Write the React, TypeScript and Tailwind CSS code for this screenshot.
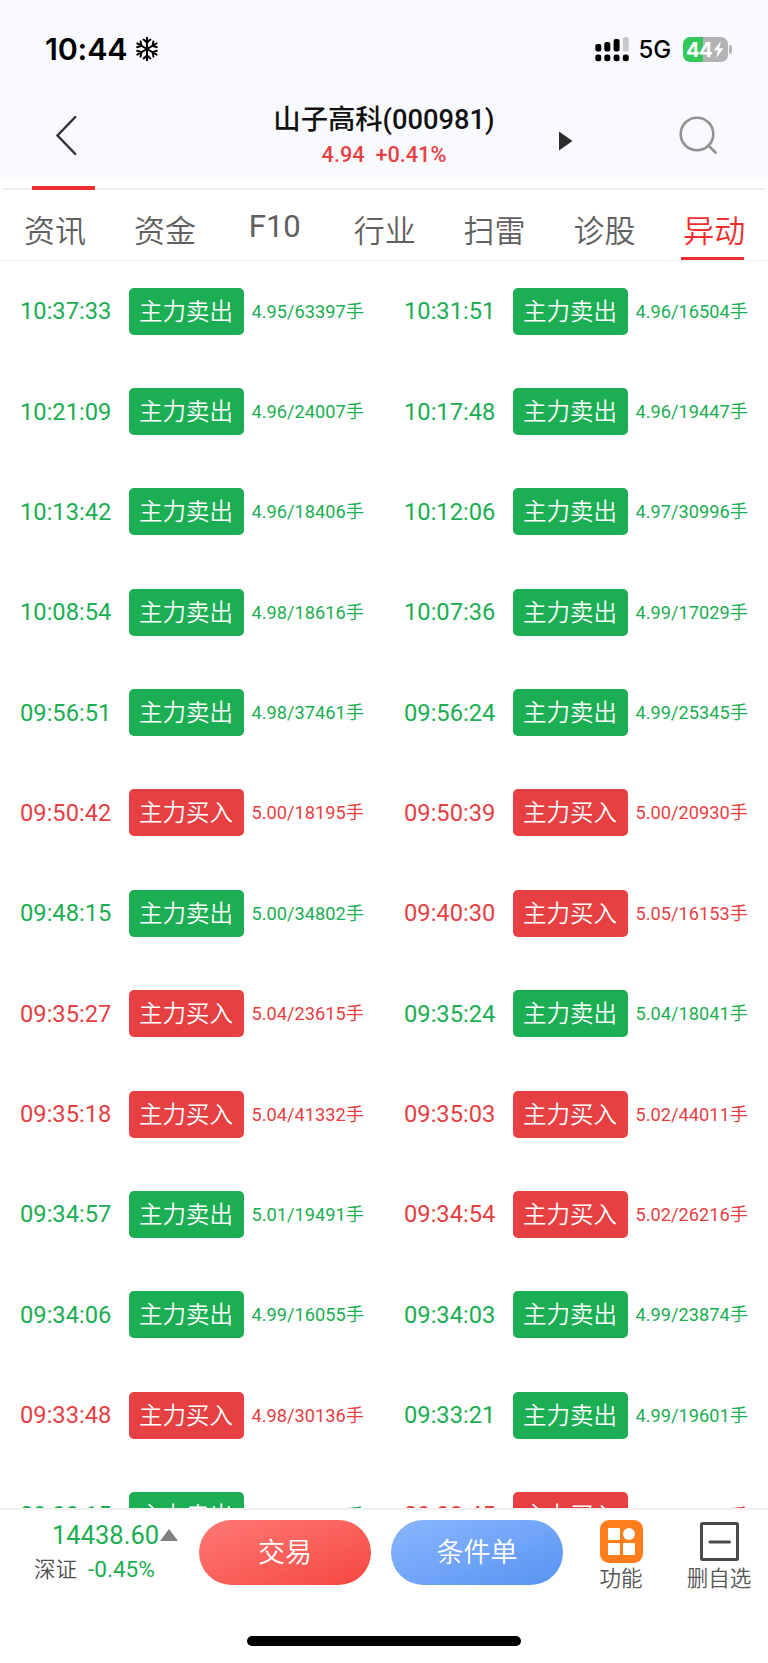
// src/App.tsx
import React from "react";

type Side = "sell" | "buy";
type Trade = [time: string, side: Side, detail: string];

const TABS = ["资讯", "资金", "F10", "行业", "扫雷", "诊股", "异动"];

const TRADES: Trade[] = [
  ["10:37:33", "sell", "4.95/63397"],
  ["10:31:51", "sell", "4.96/16504"],
  ["10:21:09", "sell", "4.96/24007"],
  ["10:17:48", "sell", "4.96/19447"],
  ["10:13:42", "sell", "4.96/18406"],
  ["10:12:06", "sell", "4.97/30996"],
  ["10:08:54", "sell", "4.98/18616"],
  ["10:07:36", "sell", "4.99/17029"],
  ["09:56:51", "sell", "4.98/37461"],
  ["09:56:24", "sell", "4.99/25345"],
  ["09:50:42", "buy", "5.00/18195"],
  ["09:50:39", "buy", "5.00/20930"],
  ["09:48:15", "sell", "5.00/34802"],
  ["09:40:30", "buy", "5.05/16153"],
  ["09:35:27", "buy", "5.04/23615"],
  ["09:35:24", "sell", "5.04/18041"],
  ["09:35:18", "buy", "5.04/41332"],
  ["09:35:03", "buy", "5.02/44011"],
  ["09:34:57", "sell", "5.01/19491"],
  ["09:34:54", "buy", "5.02/26216"],
  ["09:34:06", "sell", "4.99/16055"],
  ["09:34:03", "sell", "4.99/23874"],
  ["09:33:48", "buy", "4.98/30136"],
  ["09:33:21", "sell", "4.99/19601"],
  ["09:33:15", "sell", "4.99/18200"],
  ["09:32:45", "buy", "4.99/17500"],
];

const StatusBar: React.FC = () => (
  <div className="flex h-[98px] items-center pl-[45px] pr-[36px] font-['Inter'] text-black">
    <span className="w-[90px] text-[30.5px] leading-[30px] font-semibold tracking-[-0.2px]">10:44</span>
    <svg className="h-[26px] w-[24px]" viewBox="-12 -13 24 26" fill="none" stroke="currentColor" strokeWidth="2" strokeLinecap="round">
      {[0, 60, 120, 180, 240, 300].map((deg) => (
        <path key={deg} transform={`rotate(${deg})`} d="M0 0V-11.2M-3.4 -9.4L0 -6.4L3.4 -9.4" />
      ))}
    </svg>
    <svg className="ml-auto h-[26px] w-[36px]" viewBox="0 0 36 26" fill="#000">
      <rect x="0.3" y="8" width="6" height="7.5" rx="2" />
      <rect x="9.3" y="6" width="6" height="9.5" rx="2" />
      <rect x="18.6" y="3" width="6" height="12.5" rx="2" />
      <rect x="27.8" y="1" width="6" height="14.5" rx="2" fill="#c9cacc" />
      {[0.3, 9.3, 18.6, 27.8].map((x) => (
        <rect key={x} x={x} y="18.5" width="6" height="6.8" rx="2.4" />
      ))}
    </svg>
    <span className="mt-[2px] ml-[8px] w-[44px] text-[24px] leading-[24px] font-medium">5G</span>
    <div className="flex h-[25px] w-[45px] items-center justify-center overflow-hidden rounded-[7px] bg-linear-to-r from-[#34c759] from-[44%] to-[#b2b3b4] to-[44%] text-white">
      <span className="text-[20.5px] leading-[25px] font-bold tracking-[-0.8px]">44</span>
      <svg className="ml-[1px] h-[17px] w-[11px]" viewBox="0 0 11 18" fill="currentColor">
        <path d="M8 0L0.4 10H5L3 18L10.8 7.6H6.2Z" />
      </svg>
    </div>
    <span className="ml-[1.5px] h-[9px] w-[3px] rounded-r-full bg-[#b2b3b4]" />
  </div>
);

const TitleBar: React.FC = () => (
  <div className="flex h-[81px] items-start text-[#111]">
    <svg className="mt-[17px] ml-[54px] h-[42px] w-[24px]" viewBox="0 0 24 42" fill="none" stroke="#303033" strokeWidth="2.4" strokeLinecap="round">
      <path d="M21.3 2L3.5 20.5L21.3 39" />
    </svg>
    <div className="ml-[176px] flex w-[260px] flex-col items-center">
      <h1 className="mt-[6px] text-[27.3px] leading-[32px] font-medium whitespace-nowrap">山子高科(000981)</h1>
      <p className="mt-[6px] text-[21.7px] leading-[26px] font-medium whitespace-pre text-[#e84044]">4.94  +0.41%</p>
    </div>
    <svg className="mt-[33px] ml-[45px] h-[20px] w-[14px]" viewBox="0 0 14 20" fill="#2c2c2e">
      <path d="M0 0.5L13.5 10L0 19.5Z" />
    </svg>
    <svg className="mt-[18px] ml-[106px] h-[40px] w-[40px]" viewBox="0 0 40 40" fill="none" stroke="#929292" strokeWidth="2.6" strokeLinecap="round">
      <circle cx="18" cy="18" r="16.3" />
      <path d="M29.5 29.5L36.5 36.5" />
    </svg>
  </div>
);

const TabBar: React.FC = () => (
  <nav className="flex h-[71px] border-b border-[#f0f1f2] pl-[24px] text-[31px] font-[350] text-[#606060]">
    {TABS.map((tab, i) => (
      <div key={tab} className={`flex w-[109.9px] shrink-0 flex-col ${tab === "F10" ? "pt-[14px] pl-[5px] font-normal" : "pt-[19px]"} ${i === 6 ? "text-[#ef2f2f]" : ""}`}>
        <div className="leading-[46px]">{tab}</div>
        {i === 6 && <div className="mt-[2px] -ml-[2px] h-[3px] w-[63px] bg-[#ef2f2f]" />}
      </div>
    ))}
  </nav>
);

const TradeCell: React.FC<{ trade: Trade }> = ({ trade: [time, side, detail] }) => (
  <div className={`flex h-[100.37px] items-center pl-[20px] ${side === "sell" ? "text-[#1bae52]" : "text-[#e74043]"}`}>
    <span className="w-[108.6px] text-[23.7px] leading-[28px]">{time}</span>
    <span className={`flex h-[47px] w-[115px] items-center justify-center rounded-[5px] pt-[1px] text-[23.5px] leading-[28px] font-[350] text-white ${side === "sell" ? "bg-[#1bae52]" : "bg-[#e74043]"}`}>
      {side === "sell" ? "主力卖出" : "主力买入"}
    </span>
    <span className="mt-[1px] ml-[8px] text-[18.2px] leading-[24px] whitespace-nowrap">{detail}手</span>
  </div>
);

const BottomBar: React.FC = () => (
  <footer className="flex h-[155px] shrink-0 flex-col border-t-2 border-[#f1f1f2] bg-white">
    <div className="flex h-[126px] items-start pt-[10px]">
      <div className="w-[199px]">
        <div className="flex items-center pl-[52px] text-[#1bae52]">
          <span className="w-[106px] text-[25.5px] leading-[30px]">14438.60</span>
          <svg className="ml-[2px] h-[12px] w-[18px]" viewBox="0 0 18 12" fill="#808080">
            <path d="M0 12L9 0L18 12Z" />
          </svg>
        </div>
        <div className="mt-[6px] flex items-center pl-[34px] text-[21.5px] leading-[28px]">
          <span className="w-[54px] font-[350] text-[#4e4e4e]">深证</span>
          <span className="text-[22.6px] text-[#1bae52]">-0.45%</span>
        </div>
      </div>
      <button className="h-[65px] w-[172px] rounded-full bg-linear-to-br from-[#ff7875] to-[#f54640] pt-[2px] text-[27px] font-[350] text-white">交易</button>
      <button className="ml-[20px] h-[65px] w-[172px] rounded-full bg-linear-to-br from-[#8ab6fe] to-[#5794f2] pt-[2px] text-[27px] font-[350] text-white">条件单</button>
      <div className="ml-[28px] flex w-[60px] flex-col items-center">
        <svg className="h-[43px] w-[43px]" viewBox="0 0 43 43" fill="#fff">
          <rect width="43" height="43" rx="9" fill="#ff7d1d" />
          <rect x="8" y="8" width="12" height="12" rx="0.8" />
          <circle cx="29" cy="14" r="6" />
          <rect x="8" y="23" width="12" height="12" rx="0.8" />
          <rect x="23" y="23" width="12" height="12" rx="0.8" />
        </svg>
        <span className="mt-[1px] text-[21.5px] leading-[30px] font-[350] text-[#555]">功能</span>
      </div>
      <div className="ml-[28px] flex w-[80px] flex-col items-center">
        <svg className="mt-[2px] h-[39px] w-[39px]" viewBox="0 0 39 39" fill="none" stroke="#4a4a4a" strokeWidth="3">
          <rect x="1.5" y="1.5" width="36" height="36" rx="1" />
          <path d="M10 20H29.5" strokeLinecap="round" />
        </svg>
        <span className="mt-[3px] text-[21.5px] leading-[30px] font-[350] text-[#555]">删自选</span>
      </div>
    </div>
    <div className="mx-auto h-[10px] w-[274px] rounded-full bg-black" />
  </footer>
);

export default function App() {
  return (
    <div className="flex h-[1663px] w-[768px] flex-col overflow-hidden bg-white font-['Roboto','Noto_Sans_CJK_SC',sans-serif]">
      <header className="h-[179px] shrink-0 bg-[#f8fafd]">
        <StatusBar />
        <TitleBar />
      </header>

      {/* Divider with the indicator of the tab group above */}
      <div className="mx-[2px] flex h-[11px] shrink-0 items-end border-b-2 border-[#f0f0f0]">
        <div className="-mb-[2px] ml-[30px] h-[4px] w-[63px] bg-[#ef2f2f]" />
      </div>

      <TabBar />

      <main className="grid min-h-0 flex-1 grid-cols-2 content-start overflow-hidden">
        {TRADES.map((trade) => (
          <TradeCell key={trade[0]} trade={trade} />
        ))}
      </main>

      <BottomBar />
    </div>
  );
}
